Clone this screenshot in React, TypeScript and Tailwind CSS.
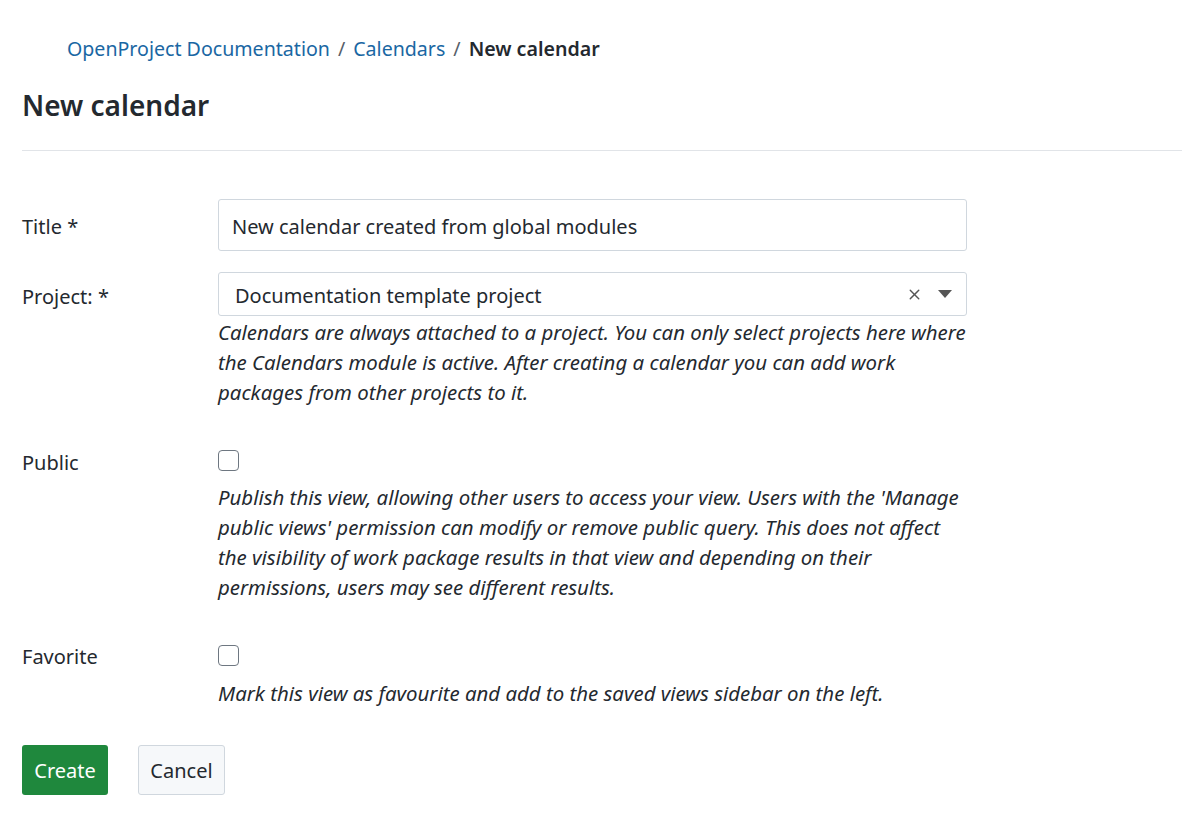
import { X } from "lucide-react";

const font = { fontFamily: '"Noto Sans", "Open Sans", sans-serif' };

function Row({
  label,
  labelClass,
  children,
}: {
  label: string;
  labelClass: string;
  children: React.ReactNode;
}) {
  return (
    <div className="flex">
      <div className={`w-[196px] shrink-0 text-[20px] text-[#24292f] ${labelClass}`}>{label}</div>
      <div className="w-[749px]">{children}</div>
    </div>
  );
}

function Checkbox() {
  return <div className="h-[21px] w-[21px] rounded-[4px] border border-[#6e7781] bg-white" />;
}

const help = "text-[20.4px] italic leading-[30px]";

export default function App() {
  return (
    <div style={font} className="min-h-screen bg-white text-[#24292f]">
      <nav className="flex items-center gap-2 pl-[67px] pt-[34px] text-[19.6px] leading-[30px]">
        <a className="text-[#1a67a3]">OpenProject Documentation</a>
        <span className="text-[#57606a]">/</span>
        <a className="text-[#1a67a3]">Calendars</a>
        <span className="text-[#57606a]">/</span>
        <span className="font-semibold">New calendar</span>
      </nav>
      <h1 className="mt-[22px] pl-[22px] text-[28px] font-semibold leading-[38px]">New calendar</h1>
      <div className="ml-[22px] mt-[26px] border-b border-[#e1e4e8]" />

      <form className="flex flex-col pl-[22px] pt-[48px]">
        <Row label="Title *" labelClass="pt-[13px] leading-[30px]">
          <div className="flex h-[52px] items-center rounded-[3px] border border-[#d0d7de] px-[13px] pt-[4px] text-[20px]">
            New calendar created from global modules
          </div>
        </Row>
        <div className="mt-[21px]">
          <Row label="Project: *" labelClass="leading-[50px]">
            <div className="flex h-[44px] items-center rounded-[3px] border border-[#d0d7de] pl-[16px] pr-[14px] text-[20px]">
              <span className="flex-1 pt-[4px]">Documentation template project</span>
              <X className="h-[17px] w-[17px] text-[#555]" strokeWidth={2} />
              <svg className="ml-[15px]" width="14" height="8" viewBox="0 0 14 8">
                <path d="M0 0 L14 0 L7 8 Z" fill="#555" />
              </svg>
            </div>
            <p className={`mt-[1px] ${help}`}>
              Calendars are always attached to a project. You can only select projects here where the Calendars module is active. After creating a calendar you can add work packages from other projects to it.
            </p>
          </Row>
        </div>
        <div className="mt-[43px]">
          <Row label="Public" labelClass="leading-[26px]">
            <Checkbox />
            <p className={`mt-[11px] ${help}`}>
              Publish this view, allowing other users to access your view. Users with the 'Manage public views' permission can modify or remove public query. This does not affect the visibility of work package results in that view and depending on their permissions, users may see different results.
            </p>
          </Row>
        </div>
        <div className="mt-[43px]">
          <Row label="Favorite" labelClass="leading-[24px]">
            <Checkbox />
            <p className={`mt-[12px] ${help}`}>
              Mark this view as favourite and add to the saved views sidebar on the left.
            </p>
          </Row>
        </div>
        <div className="mt-[37px] flex gap-[30px]">
          <button type="button" className="h-[50px] w-[86px] rounded-[3px] bg-[#1f883d] pt-[2px] text-[20px] text-white">
            Create
          </button>
          <button type="button" className="h-[50px] w-[87px] rounded-[3px] border border-[#d0d7de] bg-[#f6f8fa] pt-[2px] text-[20px]">
            Cancel
          </button>
        </div>
      </form>
    </div>
  );
}
